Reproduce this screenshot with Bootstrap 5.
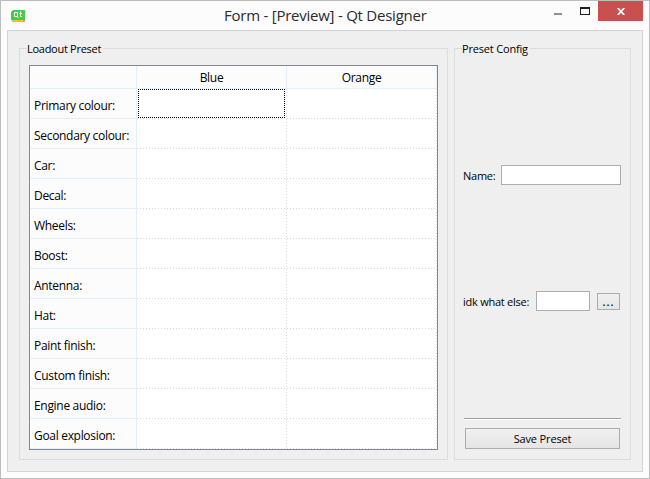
<!DOCTYPE html>
<html lang="en">
<head>
<meta charset="utf-8">
<title>Form - [Preview] - Qt Designer</title>
<link rel="stylesheet" href="https://cdn.jsdelivr.net/npm/bootstrap@5.3.0/dist/css/bootstrap.min.css">
<style>
body{font-family:"Open Sans","Noto Sans",sans-serif;font-size:12px;line-height:16px;color:#000;background:#fcfcfc}
.win{width:650px;height:479px;border:1px solid #bdbdbd;background:#fcfcfc;padding:0 6px 6px}
.title-row{height:29px}
.app-ico{margin:8px 0 0 4px}
.win-title{font-size:15px;line-height:28px;color:#2b2b2b;letter-spacing:-.24px;margin-left:198px;white-space:nowrap}
.ctl-min{width:8px;height:2px;background:#8f8f8f;margin:12px 18px 0 0}
.ctl-max{width:10px;height:8px;border:1px solid #1e1e1e;border-top-width:2px;margin:6px 8px 0 0}
.ctl-close{width:45px;height:20px;background:#c75050}
.client{height:442px;border:1px solid #d3d3d3;background:#efefef;padding:17px 11px 11px;gap:6px}
.grp{border:1px solid #dcdcdc;height:412px}
.grp-l{width:429px;padding:0 9px 9px}
.grp-r{width:177px;padding:0 9px 10px 8px}
.legend-txt{font-size:11px;height:16px;line-height:16px;white-space:nowrap}
.legend-txt span{display:inline-block;background:#efefef;height:16px;padding-right:2px;margin-left:-2px;position:relative;top:-8px;letter-spacing:-.28px}
.grp-r .legend-txt span{margin-left:-1px;letter-spacing:-.18px}
.grid-tbl{width:409px;height:385px;border:1px solid #828790;background:#fff}
.c-h{width:107px;background:#fcfcfc;border-right:1px solid #e5effc;border-bottom:1px solid #e5effc;height:30px;padding:8px 0 0 4px;line-height:17px;white-space:nowrap;letter-spacing:-.31px}
.c-corner{height:23px}
.c-t{height:23px;width:150px;background:#fcfcfc;border-right:1px solid #e5effc;border-bottom:1px solid #e5effc;text-align:center;line-height:24px;letter-spacing:-.3px}
.c-d{width:150px;height:30px;background:repeating-linear-gradient(90deg,#d8d8d8 0 1px,transparent 1px 3px) 0 100%/100% 1px no-repeat,repeating-linear-gradient(#d8d8d8 0 1px,transparent 1px 3px) 100% 0/1px 100% no-repeat}
.focus-cell{margin:0 0 0 1px;width:147px;height:29px;border:1px dotted #000}
.lbl{font-size:11px;line-height:18px;padding-top:2px;white-space:nowrap;letter-spacing:-.25px}
.name-row{height:20px;margin-top:100px}
.else-row{height:20px;margin-top:106px}
.inp{border:1px solid #abadb3;background:#fff;height:20px;border-radius:0;padding:0}
.inp-name{width:120px}
.inp-else{width:54px}
.pbtn{border:1px solid #acacac;background:linear-gradient(#f0f0f0,#e5e5e5);border-radius:0;padding:0;font-size:11px;color:#000;line-height:19px;letter-spacing:-.15px}
.more-btn{width:23px;height:17px;margin:0 1px 0 7px;line-height:13px;font-weight:600;letter-spacing:1px}
.save-btn{width:155px;height:21px;margin:8px 0 0 2px}
.sep{height:2px;background:#a0a0a0;border-bottom:1px solid #fff;width:157px;margin-left:1px}
</style>
</head>
<body>
<div class="win d-flex flex-column">
  <div class="title-row d-flex align-items-start">
    <svg class="app-ico" width="15" height="14" viewBox="0 0 15 14"><path d="M2 1h12v10H0V3z" fill="#41cd52"/><path d="M2 11h10v2H2z" fill="#f5c211"/><path d="M0 12l2-1v2zM12 11h2v2h-2z" fill="#c9a49a"/><path d="M3.500 3.500h3v4h-3zM6 7.500l1.500 1.500M9.500 2.500v5h1.500M8.500 4.500h2.500" fill="none" stroke="#fff"/></svg>
    <div class="win-title">Form - [Preview] - Qt Designer</div>
    <div class="d-flex ms-auto">
      <div class="ctl-min"></div><div class="ctl-max"></div>
      <div class="ctl-close d-flex align-items-center justify-content-center"><svg width="8" height="7" viewBox="0 0 8 7"><path d="M.7 0l6.600 7M7.300 0L.7 7" stroke="#fff" stroke-width="1.800"/></svg></div>
    </div>
  </div>
  <div class="client d-flex">
    <section class="grp grp-l">
      <div class="legend-txt"><span>Loadout Preset</span></div>
      <div class="grid-tbl">
        <div class="d-flex"><div class="c-h c-corner"></div><div class="c-t">Blue</div><div class="c-t">Orange</div></div>
        <div class="d-flex"><div class="c-h">Primary colour:</div><div class="c-d"><div class="focus-cell"></div></div><div class="c-d"></div></div>
        <div class="d-flex"><div class="c-h">Secondary colour:</div><div class="c-d"></div><div class="c-d"></div></div>
        <div class="d-flex"><div class="c-h">Car:</div><div class="c-d"></div><div class="c-d"></div></div>
        <div class="d-flex"><div class="c-h">Decal:</div><div class="c-d"></div><div class="c-d"></div></div>
        <div class="d-flex"><div class="c-h">Wheels:</div><div class="c-d"></div><div class="c-d"></div></div>
        <div class="d-flex"><div class="c-h">Boost:</div><div class="c-d"></div><div class="c-d"></div></div>
        <div class="d-flex"><div class="c-h">Antenna:</div><div class="c-d"></div><div class="c-d"></div></div>
        <div class="d-flex"><div class="c-h">Hat:</div><div class="c-d"></div><div class="c-d"></div></div>
        <div class="d-flex"><div class="c-h">Paint finish:</div><div class="c-d"></div><div class="c-d"></div></div>
        <div class="d-flex"><div class="c-h">Custom finish:</div><div class="c-d"></div><div class="c-d"></div></div>
        <div class="d-flex"><div class="c-h">Engine audio:</div><div class="c-d"></div><div class="c-d"></div></div>
        <div class="d-flex"><div class="c-h">Goal explosion:</div><div class="c-d"></div><div class="c-d"></div></div>
      </div>
    </section>
    <section class="grp grp-r d-flex flex-column">
      <div class="legend-txt"><span>Preset Config</span></div>
      <div class="name-row d-flex align-items-center"><label class="lbl">Name:</label><input class="inp inp-name ms-auto"></div>
      <div class="else-row d-flex align-items-center"><label class="lbl">idk what else:</label><input class="inp inp-else ms-auto"><button class="pbtn more-btn">...</button></div>
      <div class="sep mt-auto"></div>
      <button class="pbtn save-btn">Save Preset</button>
    </section>
  </div>
</div>
<script src="https://cdn.jsdelivr.net/npm/bootstrap@5.3.0/dist/js/bootstrap.bundle.min.js"></script>
</body>
</html>
